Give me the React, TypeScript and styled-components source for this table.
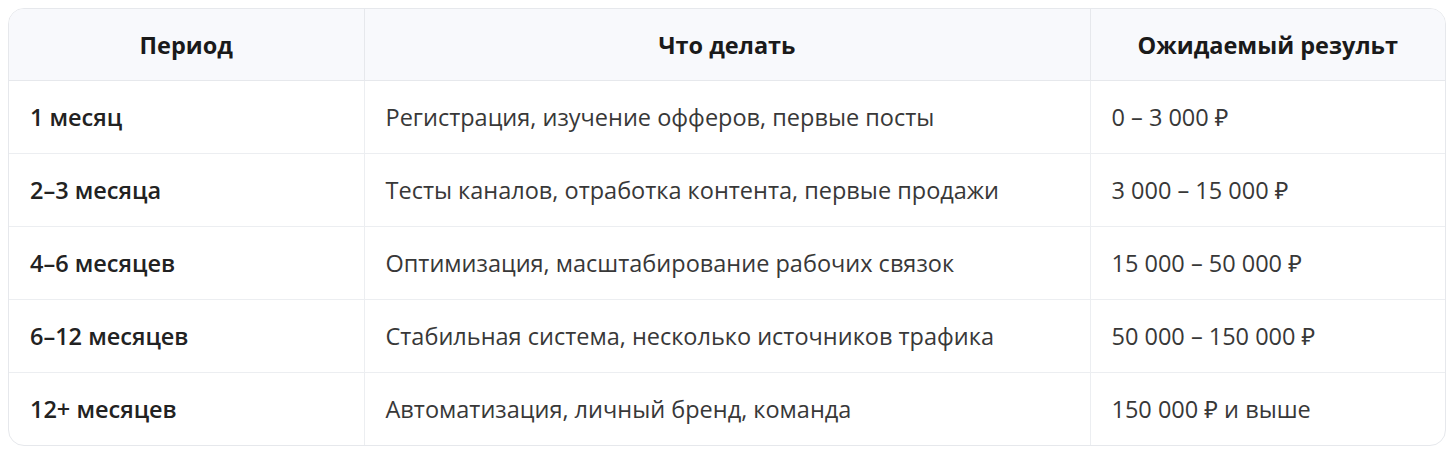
import React from "react";
import styled, { createGlobalStyle } from "styled-components";

const GlobalStyle = createGlobalStyle`
  html, body {
    margin: 0;
    padding: 0;
    background: #ffffff;
  }
  body {
    font-family: "Open Sans", "Noto Sans", sans-serif;
  }
`;

const rows = [
  { period: "1 месяц", todo: "Регистрация, изучение офферов, первые посты", result: "0 – 3 000 ₽" },
  { period: "2–3 месяца", todo: "Тесты каналов, отработка контента, первые продажи", result: "3 000 – 15 000 ₽" },
  { period: "4–6 месяцев", todo: "Оптимизация, масштабирование рабочих связок", result: "15 000 – 50 000 ₽" },
  { period: "6–12 месяцев", todo: "Стабильная система, несколько источников трафика", result: "50 000 – 150 000 ₽" },
  { period: "12+ месяцев", todo: "Автоматизация, личный бренд, команда", result: "150 000 ₽ и выше" },
];

function App() {
  return (
    <>
      <GlobalStyle />
      <StyledPage>
        <StyledWrap>
          <StyledTable>
            <colgroup>
              <col style={{ width: 355 }} />
              <col style={{ width: 726 }} />
              <col />
            </colgroup>
            <thead>
              <tr>
                <StyledTh>Период</StyledTh>
                <StyledTh>Что делать</StyledTh>
                <StyledTh>Ожидаемый результ</StyledTh>
              </tr>
            </thead>
            <tbody>
              {rows.map((row, index) => (
                <tr key={index}>
                  <StyledTd $strong>{row.period}</StyledTd>
                  <StyledTd>{row.todo}</StyledTd>
                  <StyledTd>{row.result}</StyledTd>
                </tr>
              ))}
            </tbody>
          </StyledTable>
        </StyledWrap>
      </StyledPage>
    </>
  );
}

const StyledPage = styled.div`
  padding: 8px;
`;

const StyledWrap = styled.div`
  border: 1px solid #e6e8ec;
  border-radius: 16px;
  overflow: hidden;
`;

const StyledTable = styled.table`
  width: 100%;
  border-collapse: collapse;
  table-layout: fixed;

  tr:last-child td {
    border-bottom: none;
  }
  th:last-child,
  td:last-child {
    border-right: none;
  }
`;

const StyledTh = styled.th`
  height: 71px;
  padding: 0 20px;
  background: #f8f9fc;
  color: #1a1a1a;
  font-size: 23.5px;
  font-weight: 700;
  text-align: center;
  border-bottom: 1px solid #e6e8ec;
  border-right: 1px solid #e6e8ec;
  white-space: nowrap;
  overflow: hidden;
`;

const StyledTd = styled.td<{ $strong?: boolean }>`
  height: 72px;
  padding: 0 21px;
  color: ${(p) => (p.$strong ? "#222222" : "#383838")};
  font-size: 23.5px;
  font-weight: ${(p) => (p.$strong ? 600 : 400)};
  border-bottom: 1px solid #eceef1;
  border-right: 1px solid #eceef1;
  white-space: nowrap;
`;

export default App;
